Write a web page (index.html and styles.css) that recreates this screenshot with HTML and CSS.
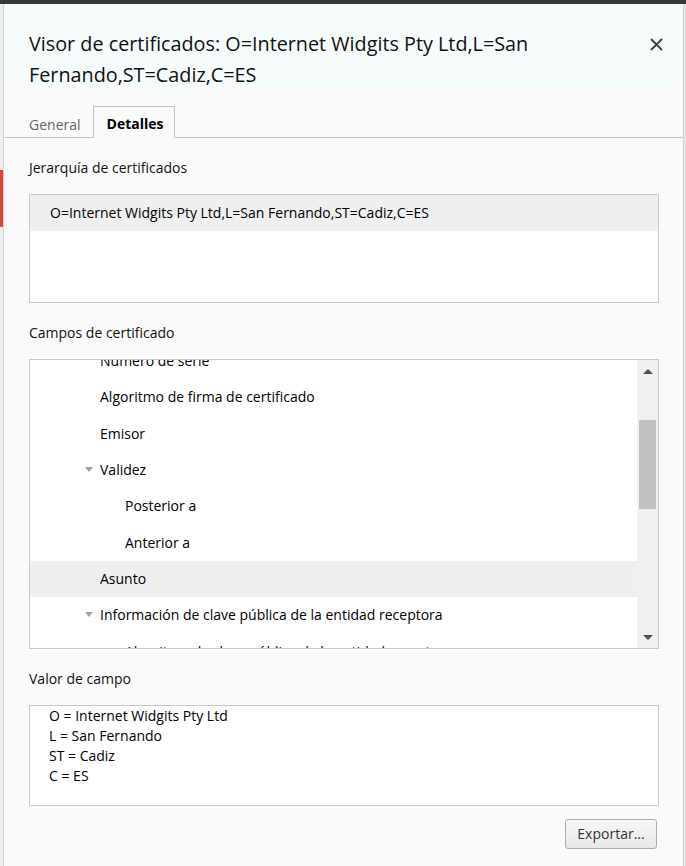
FILE: index.html
```html
<!DOCTYPE html>
<html lang="es">
<head>
<meta charset="utf-8">
<title>Visor de certificados</title>
<link rel="stylesheet" href="styles.css">
</head>
<body>
<div class="topbar"></div>
<div class="screen">
  <div class="backdrop-left">
    <span class="bd-red"></span>
  </div>
  <div class="dialog">
    <header class="dlg-header">
      <h1 class="dlg-title">Visor de certificados: O=Internet Widgits Pty Ltd,L=San Fernando,ST=Cadiz,C=ES</h1>
      <button class="close-btn" aria-label="Cerrar">
        <svg width="13" height="13" viewBox="0 0 13 13"><path d="M1 1 L12 12 M12 1 L1 12" stroke="#404040" stroke-width="1.8" fill="none"/></svg>
      </button>
    </header>
    <nav class="tabs">
      <div class="tab tab-first">General</div>
      <div class="tab tab-active">Detalles</div>
    </nav>
    <main class="content">
      <section class="section">
        <div class="sec-label">Jerarquía de certificados</div>
        <div class="box hierarchy">
          <div class="h-row selected">O=Internet Widgits Pty Ltd,L=San Fernando,ST=Cadiz,C=ES</div>
        </div>
      </section>
      <section class="section">
        <div class="sec-label">Campos de certificado</div>
        <div class="box fields">
          <div class="tree">
            <div class="t-row first l1">Número de serie</div>
            <div class="t-row l1">Algoritmo de firma de certificado</div>
            <div class="t-row l1">Emisor</div>
            <div class="t-row l1 open"><span class="twisty"></span>Validez</div>
            <div class="t-row l2">Posterior a</div>
            <div class="t-row l2">Anterior a</div>
            <div class="t-row l1 selected">Asunto</div>
            <div class="t-row l1 open"><span class="twisty"></span>Información de clave pública de la entidad receptora</div>
            <div class="t-row l2">Algoritmo de clave pública de la entidad receptora</div>
          </div>
          <div class="scrollbar">
            <div class="sb-btn"><span class="arr-up"></span></div>
            <div class="sb-track"><div class="sb-thumb"></div></div>
            <div class="sb-btn"><span class="arr-down"></span></div>
          </div>
        </div>
      </section>
      <section class="section">
        <div class="sec-label">Valor de campo</div>
        <div class="box value">
          <div>O = Internet Widgits Pty Ltd</div>
          <div>L = San Fernando</div>
          <div>ST = Cadiz</div>
          <div>C = ES</div>
        </div>
      </section>
      <div class="footer">
        <button class="btn">Exportar...</button>
      </div>
    </main>
  </div>
  <div class="backdrop-right"></div>
</div>
</body>
</html>
```

FILE: styles.css
```css
* { box-sizing: border-box; }
html, body { margin: 0; padding: 0; }
body {
  width: 686px;
  height: 866px;
  overflow: hidden;
  background: #ececec;
  font-family: "Open Sans", "Noto Sans", sans-serif;
  font-size: 14px;
  color: #000;
}
.topbar { height: 4px; background: #383838; }
.screen { display: flex; height: 862px; }
.backdrop-left {
  width: 4px;
  background: #eeeeee;
  border-right: 1px solid #d2d2d2;
  display: flex;
  flex-direction: column;
}
.bd-red { display: block; width: 3px; height: 57px; margin-top: 166px; background: #d8463c; }
.backdrop-right {
  width: 3px;
  background: #e4e4e4;
  border-left: 1px solid #d4d4d4;
}
.dialog {
  flex: 1;
  background: #fafafa;
  display: flex;
  flex-direction: column;
}
.dlg-header {
  height: 84px;
  background: #f6fcfc;
  display: flex;
  align-items: flex-start;
  padding: 24px 20px 0 25px;
}
.dlg-title {
  flex: 1;
  margin: 0;
  font-size: 19.8px;
  font-weight: 400;
  line-height: 31px;
  color: #111;
  padding-right: 60px;
}
.close-btn {
  border: 0;
  background: transparent;
  padding: 0;
  margin-top: 10px;
  width: 13px;
  height: 13px;
  display: flex;
}
.tabs {
  height: 50px;
  display: flex;
  align-items: flex-end;
  padding-left: 11px;
  border-bottom: 1px solid #c4c4c4;
}
.tab {
  height: 31px;
  padding: 3px 13px 0;
  line-height: 28px;
  color: #666;
  border: 1px solid transparent;
  border-bottom: 0;
  margin-bottom: -1px;
}
.tab-first { padding-right: 11px; }
.tab-active {
  color: #000;
  font-weight: 700;
  background: #fafafa;
  border-color: #c4c4c4;
  height: 32px;
  padding: 3px 11px 0 13px;
}
.content { padding: 0 24px 0 25px; flex: 1; display: flex; flex-direction: column; }
.section { padding-top: 20px; }
.sec-label { line-height: 20px; margin-bottom: 16px; color: #111; }
.box { background: #fff; border: 1px solid #c8c8c8; }
.hierarchy { height: 109px; }
.h-row { height: 36px; line-height: 36px; padding-left: 20px; }
.selected { background: #efefef; }
.fields { height: 290px; display: flex; }
.tree { flex: 1; overflow: hidden; }
.t-row {
  height: 36.34px;
  line-height: 36px;
  display: flex;
  align-items: center;
  white-space: nowrap;
}
.t-row.first { margin-top: -17px; }
.t-row.l1 { padding-left: 70px; }
.t-row.l2 { padding-left: 95px; }
.t-row.open { padding-left: 55px; }
.twisty {
  width: 0; height: 0;
  border-left: 4.5px solid transparent;
  border-right: 4.5px solid transparent;
  border-top: 5px solid #a0a0a0;
  margin-right: 7px;
  margin-top: -2px;
}
.scrollbar { width: 21px; background: #f0f0f0; display: flex; flex-direction: column; }
.sb-btn { height: 21px; display: flex; align-items: center; justify-content: center; }
.arr-up, .arr-down { width: 0; height: 0; border-left: 5px solid transparent; border-right: 5px solid transparent; }
.arr-up { border-bottom: 5px solid #505050; margin-top: 1px; }
.arr-down { border-top: 5px solid #505050; margin-top: -1px; }
.sb-track { flex: 1; padding: 39px 2px 0 2px; }
.sb-thumb { height: 89px; background: #c1c1c1; }
.value { height: 101px; padding: 0 19px; line-height: 20px; }
.footer { display: flex; justify-content: flex-end; padding-top: 13px; padding-right: 2px; }
.btn {
  width: 92px;
  height: 30px;
  font-family: inherit;
  font-size: 14px;
  color: #333;
  background: linear-gradient(#f7f7f7, #e8e8e8);
  border: 1px solid #adadad;
  border-radius: 3px;
  padding: 0 0 2px;
}
```
